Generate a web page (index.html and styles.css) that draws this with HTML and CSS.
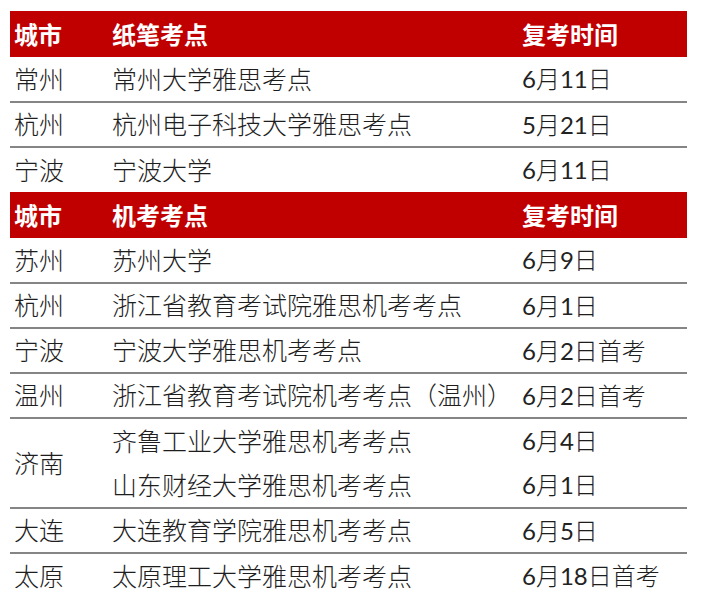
FILE: index.html
```html
<!DOCTYPE html>
<html lang="zh-CN">
<head>
<meta charset="utf-8">
<link rel="stylesheet" href="styles.css">
</head>
<body>
<table class="sched">
  <colgroup>
    <col class="c-city">
    <col class="c-site">
    <col class="c-date">
  </colgroup>
  <tbody>
    <tr class="head"><td>城市</td><td>纸笔考点</td><td>复考时间</td></tr>
    <tr class="line"><td>常州</td><td>常州大学雅思考点</td><td class="date"><span class="n">6</span>月<span class="n">11</span>日</td></tr>
    <tr class="line"><td>杭州</td><td>杭州电子科技大学雅思考点</td><td class="date"><span class="n">5</span>月<span class="n">21</span>日</td></tr>
    <tr><td>宁波</td><td>宁波大学</td><td class="date"><span class="n">6</span>月<span class="n">11</span>日</td></tr>
    <tr class="head"><td>城市</td><td>机考考点</td><td>复考时间</td></tr>
    <tr class="line"><td>苏州</td><td>苏州大学</td><td class="date"><span class="n">6</span>月<span class="n">9</span>日</td></tr>
    <tr class="line"><td>杭州</td><td>浙江省教育考试院雅思机考考点</td><td class="date"><span class="n">6</span>月<span class="n">1</span>日</td></tr>
    <tr class="line"><td>宁波</td><td>宁波大学雅思机考考点</td><td class="date"><span class="n">6</span>月<span class="n">2</span>日首考</td></tr>
    <tr class="line"><td>温州</td><td>浙江省教育考试院机考考点（温州）</td><td class="date"><span class="n">6</span>月<span class="n">2</span>日首考</td></tr>
    <tr><td rowspan="2" class="span">济南</td><td>齐鲁工业大学雅思机考考点</td><td class="date"><span class="n">6</span>月<span class="n">4</span>日</td></tr>
    <tr class="line"><td>山东财经大学雅思机考考点</td><td class="date"><span class="n">6</span>月<span class="n">1</span>日</td></tr>
    <tr class="line"><td>大连</td><td>大连教育学院雅思机考考点</td><td class="date"><span class="n">6</span>月<span class="n">5</span>日</td></tr>
    <tr><td>太原</td><td>太原理工大学雅思机考考点</td><td class="date"><span class="n">6</span>月<span class="n">18</span>日首考</td></tr>
  </tbody>
</table>
</body>
</html>
```
FILE: styles.css
```css
html, body {
  margin: 0;
  padding: 0;
  background: #ffffff;
}
body {
  padding: 11px 0 0 10px;
}
.sched {
  border-collapse: collapse;
  table-layout: fixed;
  width: 677px;
  font-family: "Lato", "Noto Sans CJK SC", sans-serif;
  font-size: 25px;
  font-weight: 300;
  color: #1e1e1e;
}
.c-city { width: 98px; }
.c-site { width: 410px; }
.c-date { width: 169px; }
.sched td {
  padding: 0 0 0 4px;
  height: 45px;
  box-sizing: border-box;
  vertical-align: middle;
  white-space: nowrap;
  line-height: 1;
}
.sched td.date {
  font-size: 24px;
}
.n {
  font-weight: 400;
  color: #222222;
}
.head td {
  background: #c00000;
  color: #ffffff;
  font-weight: 700;
  font-size: 24px;
  height: 46px;
  font-family: "Noto Sans CJK SC", sans-serif;
}
.line td {
  border-bottom: 2px solid #858585;
}
.sched td.span {
  border-bottom: 2px solid #858585;
}
```
